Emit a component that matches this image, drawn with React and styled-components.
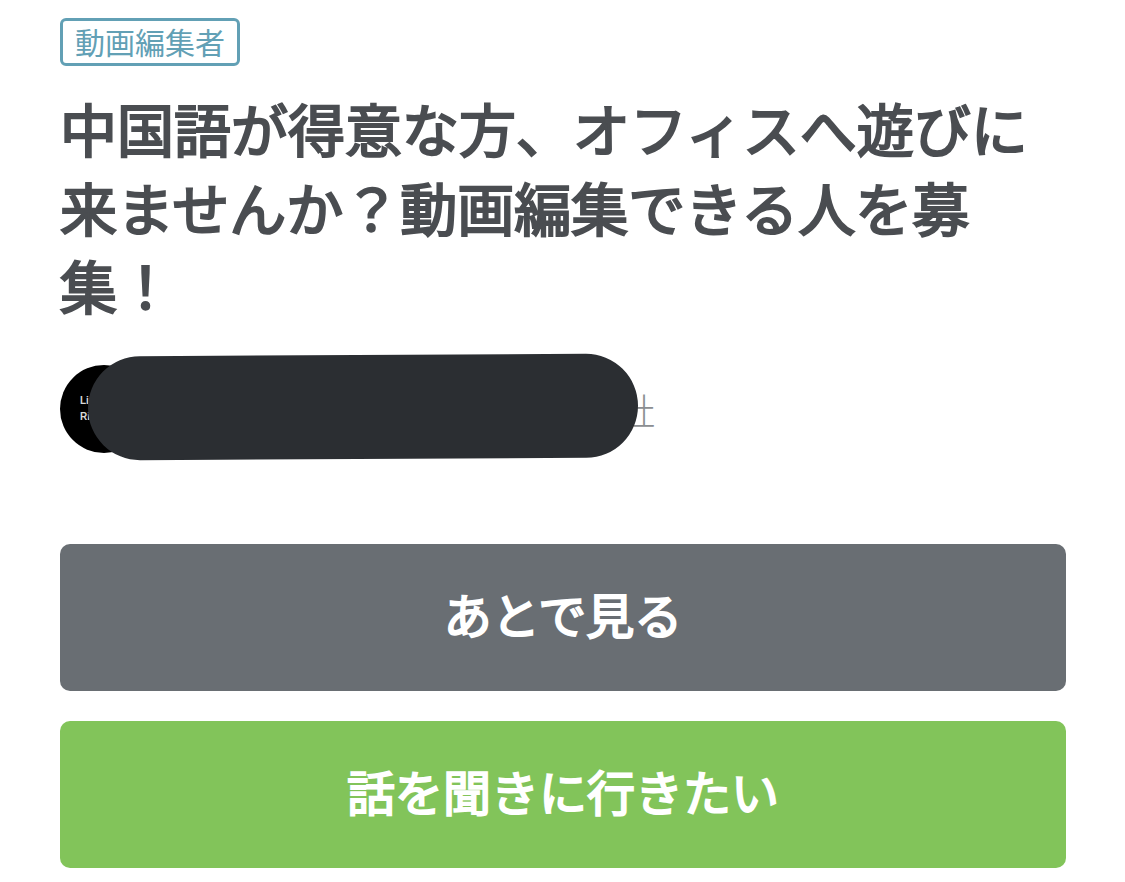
import React from 'react'
import styled, { createGlobalStyle } from 'styled-components'

const GlobalStyle = createGlobalStyle`
  html, body {
    margin: 0;
    padding: 0;
    background: #fff;
  }
  body {
    font-family: "Noto Sans CJK JP", "Noto Sans", sans-serif;
  }
`

const Page = styled.div`
  width: 1125px;
  height: 882px;
  box-sizing: border-box;
  padding: 18px 59px 0 60px;
  overflow: hidden;
`

const Tag = styled.div`
  display: inline-flex;
  align-items: center;
  justify-content: center;
  box-sizing: border-box;
  width: 180px;
  height: 48px;
  padding-bottom: 2px;
  border: 3px solid #62a0b5;
  border-radius: 6px;
  color: #62a0b5;
  font-size: 30px;
  line-height: 1;
`

const Title = styled.h1`
  margin: 22px 0 0;
  width: 1000px;
  color: #4a4d51;
  font-size: 57px;
  font-weight: 400;
  line-height: 78.5px;
  -webkit-text-stroke: 2.2px #4a4d51;
`

const CompanyRow = styled.div`
  position: relative;
  display: flex;
  align-items: center;
  gap: 10px;
  margin-top: 41px;
  height: 88px;
`

const Avatar = styled.div`
  flex: none;
  display: flex;
  flex-direction: column;
  justify-content: center;
  box-sizing: border-box;
  width: 88px;
  height: 88px;
  padding-left: 20px;
  border-radius: 50%;
  background: #000;
  color: #d8d8d8;
  font-family: "Liberation Sans", sans-serif;
  font-size: 10px;
  font-weight: 700;
  line-height: 16px;
`

const CompanyName = styled.div`
  width: 497px;
  color: #8b8e91;
  font-size: 36px;
  font-weight: 300;
  text-align: right;
`

const Redaction = styled.div`
  position: absolute;
  left: 28px;
  top: -10px;
  width: 550px;
  height: 104px;
  border-radius: 52px;
  background: #2b2e32;
  transform: rotate(-0.3deg);
`

const Actions = styled.div`
  display: flex;
  flex-direction: column;
  gap: 30px;
  margin-top: 91px;
`

const Button = styled.button`
  display: block;
  width: 1006px;
  height: 147px;
  padding: 0 0 9px;
  border: 0;
  border-radius: 10px;
  background: ${(p) => (p.$primary ? '#82c45a' : '#696e73')};
  color: #fff;
  font-family: inherit;
  font-size: 48px;
  font-weight: 400;
  -webkit-text-stroke: 2px #fff;
`

export default function App() {
  return (
    <Page>
      <GlobalStyle />
      <Tag>動画編集者</Tag>
      <Title>中国語が得意な方、オフィスへ遊びに来ませんか？動画編集できる人を募集！</Title>
      <CompanyRow>
        <Avatar>
          <span>Li</span>
          <span>Ri</span>
        </Avatar>
        <CompanyName>株式会社</CompanyName>
        <Redaction />
      </CompanyRow>
      <Actions>
        <Button>あとで見る</Button>
        <Button $primary>話を聞きに行きたい</Button>
      </Actions>
    </Page>
  )
}
